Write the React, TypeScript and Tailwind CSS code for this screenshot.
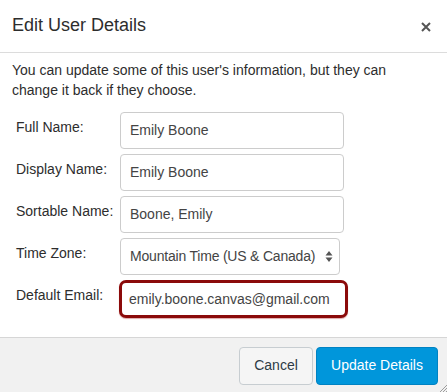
import React from 'react';

const font = { fontFamily: '"Liberation Sans", Arial, sans-serif' };

const Field: React.FC<{ label: string; value: string }> = ({ label, value }) => (
    <div className="flex items-start">
        <label className="w-[104px] pt-[5px] text-[14px] leading-[20px] text-[#2d2d2d]">{label}</label>
        <div className="w-[224px] h-[37px] border border-[#ccc] rounded-[4px] bg-white flex items-center px-[9px] text-[14px] text-[#444]">
            {value}
        </div>
    </div>
);

const App: React.FC = () => {
    return (
        <div className="w-[447px] h-[392px] bg-white flex flex-col relative overflow-hidden" style={font}>
            <header className="h-[53px] border-b border-[#dcdcdc] flex items-center justify-between pl-[12px] pr-[16px] flex-shrink-0">
                <h1 className="text-[18px] text-[#2d2d2d] pb-[2px]">Edit User Details</h1>
                <svg width="10" height="10" viewBox="0 0 10 10" className="mt-[1px]">
                    <path d="M1 1 L9 9 M9 1 L1 9" stroke="#555" strokeWidth="2" />
                </svg>
            </header>
            <div className="flex-1 px-[12px] pt-[7px]">
                <p className="text-[14px] leading-[20px] text-[#2d2d2d]">
                    You can update some of this user's information, but they can change it back if they choose.
                </p>
                <div className="mt-[12px] pl-[4px] flex flex-col gap-[5px]">
                    <Field label="Full Name:" value="Emily Boone" />
                    <Field label="Display Name:" value="Emily Boone" />
                    <Field label="Sortable Name:" value="Boone, Emily" />
                    <div className="flex items-start">
                        <label className="w-[104px] pt-[5px] text-[14px] leading-[20px] text-[#2d2d2d]">Time Zone:</label>
                        <div className="w-[220px] h-[37px] border border-[#ccc] rounded-[4px] bg-white flex items-center justify-between pl-[9px] pr-[6px] text-[14px] text-[#444]">
                            <span className="whitespace-nowrap overflow-hidden w-[188px] tracking-[-0.2px]">Mountain Time (US &amp; Canada)</span>
                            <svg width="8" height="13" viewBox="0 0 8 13">
                                <path d="M4 1 L7.5 5.5 L0.5 5.5 Z M4 12 L7.5 7.5 L0.5 7.5 Z" fill="#555" />
                            </svg>
                        </div>
                    </div>
                    <div className="flex items-start">
                        <label className="w-[103px] pt-[5px] text-[14px] leading-[20px] text-[#2d2d2d]">Default Email:</label>
                        <div className="w-[229px] h-[38px] border-[3px] border-[#8b0a0a] rounded-[7px] bg-white flex items-center px-[7px] text-[14px] text-[#444] shadow-[0_1px_1px_rgba(180,60,60,0.45)]">
                            emily.boone.canvas@gmail.com
                        </div>
                    </div>
                </div>
            </div>
            <footer className="h-[55px] border-t border-[#d6d6d6] bg-[#f1f1f1] flex items-center justify-end gap-[3px] pr-[9px] flex-shrink-0 pt-[1px]">
                <button className="h-[38px] w-[74px] border border-[#c7cdd1] rounded-[4px] bg-[#f5f5f5] text-[14px] text-[#2d3b45]">Cancel</button>
                <button className="h-[38px] w-[122px] border border-[#0082c2] rounded-[4px] bg-[#0096db] text-[14px] text-white">Update Details</button>
            </footer>
            <svg width="8" height="8" viewBox="0 0 8 8" className="absolute right-0 bottom-0">
                <path d="M8 1 L1 8 M8 4 L4 8 M8 7 L7 8" stroke="#888" strokeWidth="0.8" />
            </svg>
        </div>
    );
};

export default App;
